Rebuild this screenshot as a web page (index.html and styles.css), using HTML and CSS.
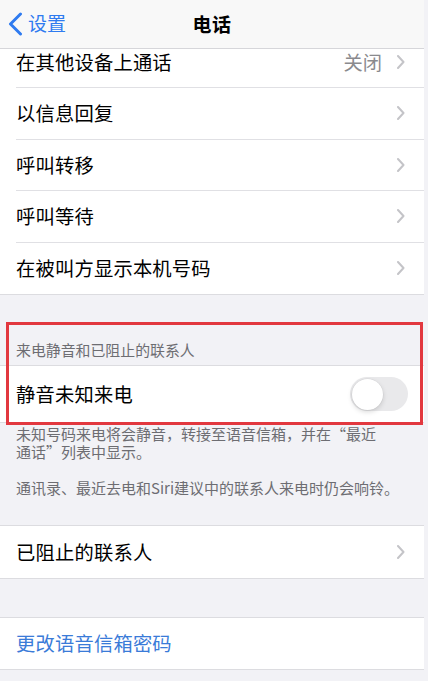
FILE: index.html
```html
<!DOCTYPE html>
<html lang="zh-CN">
<head>
    <meta charset="UTF-8">
    <meta name="viewport" content="width=device-width, initial-scale=1.0">
    <title>电话</title>
    <link rel="stylesheet" href="styles.css">
</head>
<body>
    <div class="screen">
        <header class="navbar">
            <a class="back" href="#">
                <svg width="15" height="24" viewBox="0 0 15 24"><path d="M12.5 2 L2.5 12 L12.5 22" fill="none" stroke="currentColor" stroke-width="3" stroke-linecap="round" stroke-linejoin="round"/></svg>
                <span>设置</span>
            </a>
            <h1>电话</h1>
        </header>

        <main class="content">
            <ul class="group first">
                <li class="cell">
                    <div class="cell-body">
                        <span class="label">在其他设备上通话</span>
                        <span class="detail">关闭</span>
                        <svg class="chevron" width="8" height="14" viewBox="0 0 8 14"><path d="M1 1 L6.5 7 L1 13" fill="none" stroke="currentColor" stroke-width="2" stroke-linecap="round" stroke-linejoin="round"/></svg>
                    </div>
                </li>
                <li class="cell">
                    <div class="cell-body">
                        <span class="label">以信息回复</span>
                        <svg class="chevron" width="8" height="14" viewBox="0 0 8 14"><path d="M1 1 L6.5 7 L1 13" fill="none" stroke="currentColor" stroke-width="2" stroke-linecap="round" stroke-linejoin="round"/></svg>
                    </div>
                </li>
                <li class="cell">
                    <div class="cell-body">
                        <span class="label">呼叫转移</span>
                        <svg class="chevron" width="8" height="14" viewBox="0 0 8 14"><path d="M1 1 L6.5 7 L1 13" fill="none" stroke="currentColor" stroke-width="2" stroke-linecap="round" stroke-linejoin="round"/></svg>
                    </div>
                </li>
                <li class="cell">
                    <div class="cell-body">
                        <span class="label">呼叫等待</span>
                        <svg class="chevron" width="8" height="14" viewBox="0 0 8 14"><path d="M1 1 L6.5 7 L1 13" fill="none" stroke="currentColor" stroke-width="2" stroke-linecap="round" stroke-linejoin="round"/></svg>
                    </div>
                </li>
                <li class="cell">
                    <div class="cell-body">
                        <span class="label">在被叫方显示本机号码</span>
                        <svg class="chevron" width="8" height="14" viewBox="0 0 8 14"><path d="M1 1 L6.5 7 L1 13" fill="none" stroke="currentColor" stroke-width="2" stroke-linecap="round" stroke-linejoin="round"/></svg>
                    </div>
                </li>
            </ul>

            <div class="highlight">
                <h2 class="section-header">来电静音和已阻止的联系人</h2>
                <ul class="group">
                    <li class="cell tall">
                        <div class="cell-body">
                            <span class="label">静音未知来电</span>
                            <span class="switch"><span class="knob"></span></span>
                        </div>
                    </li>
                </ul>
            </div>

            <div class="section-footer">
                <p>未知号码来电将会静音，转接至语音信箱，并在“最近<span class="word">通话”</span>列表中显示。</p>
                <p>通讯录、最近去电和Siri建议中的联系人来电时仍会响铃。</p>
            </div>

            <ul class="group">
                <li class="cell">
                    <div class="cell-body">
                        <span class="label">已阻止的联系人</span>
                        <svg class="chevron" width="8" height="14" viewBox="0 0 8 14"><path d="M1 1 L6.5 7 L1 13" fill="none" stroke="currentColor" stroke-width="2" stroke-linecap="round" stroke-linejoin="round"/></svg>
                    </div>
                </li>
            </ul>

            <div class="spacer"></div>

            <ul class="group">
                <li class="cell">
                    <div class="cell-body">
                        <span class="label link">更改语音信箱密码</span>
                    </div>
                </li>
            </ul>
        </main>
    </div>
</body>
</html>
```

FILE: styles.css
```css
/* Page */
body {
    margin: 0;
    background-color: #f2f2f6;
    font-family: 'Noto Sans', 'Noto Sans CJK SC', sans-serif;
    color: #000;
    overflow: hidden;
}

.screen {
    width: 424px;
    height: 681px;
    overflow: hidden;
}

/* Navigation bar */
.navbar {
    position: relative;
    z-index: 2;
    height: 48px;
    display: flex;
    align-items: center;
    justify-content: center;
    background: #f8f8f8;
    border-bottom: 1px solid #d6d6da;
}

.navbar h1 {
    margin: 0;
    font-size: 19px;
    font-weight: 600;
    letter-spacing: 0.5px;
}

.back {
    position: absolute;
    left: 8px;
    top: 12px;
    display: flex;
    align-items: center;
    gap: 5px;
    color: #2f7bf0;
    text-decoration: none;
    font-size: 19px;
    height: 24px;
}

.back span {
    line-height: 24px;
}

/* Grouped lists */
.group {
    list-style: none;
    margin: 0;
    padding: 0;
    background: #fff;
    border-top: 1px solid #dcdce0;
    border-bottom: 1px solid #dcdce0;
}

.group.first {
    margin-top: -12.5px;
    border-top: none;
}

.cell {
    height: 51.5px;
    padding-left: 16px;
}

.cell.tall {
    height: 56px;
}

.cell-body {
    height: 100%;
    box-sizing: border-box;
    display: flex;
    align-items: center;
    padding-right: 19px;
    border-bottom: 1px solid #e0e0e4;
}

.cell:last-child .cell-body {
    border-bottom: none;
}

.label {
    flex: 1;
    font-size: 19.3px;
    letter-spacing: 0.2px;
}

.label.link {
    color: #3a7bd8;
}

.detail {
    font-size: 19.3px;
    color: #8a8a8e;
    margin-right: 15px;
}

.chevron {
    color: #c4c4c8;
}

/* Switch */
.switch {
    display: flex;
    width: 58px;
    height: 34px;
    box-sizing: border-box;
    padding: 1.5px;
    margin-right: -3px;
    border-radius: 17px;
    background: #e9e9eb;
}

.knob {
    width: 31px;
    height: 31px;
    border-radius: 50%;
    background: #fff;
    box-shadow: 0 2px 5px rgba(0, 0, 0, 0.15), 0 0 0 0.5px rgba(0, 0, 0, 0.06);
}

/* Section header / footer */
.highlight {
    position: relative;
}

.highlight::after {
    content: "";
    position: absolute;
    top: 27px;
    left: 6px;
    right: 1px;
    bottom: -2px;
    border: 3px solid #e2383f;
    pointer-events: none;
}

.section-header {
    margin: 0;
    padding: 46px 16px 6px;
    font-size: 14.9px;
    font-weight: normal;
    line-height: 18px;
    color: #6d6d72;
}

.section-footer {
    padding: 2px 16px 28px;
    width: 385px;
    font-family: 'Noto Sans CJK SC', sans-serif;
    font-size: 15px;
    line-height: 18px;
    color: #6d6d72;
}

.section-footer p {
    margin: 0 0 18px;
}

.section-footer p:last-child {
    margin-bottom: 0;
}

.section-footer .word {
    white-space: nowrap;
}

.spacer {
    height: 38px;
}
```
